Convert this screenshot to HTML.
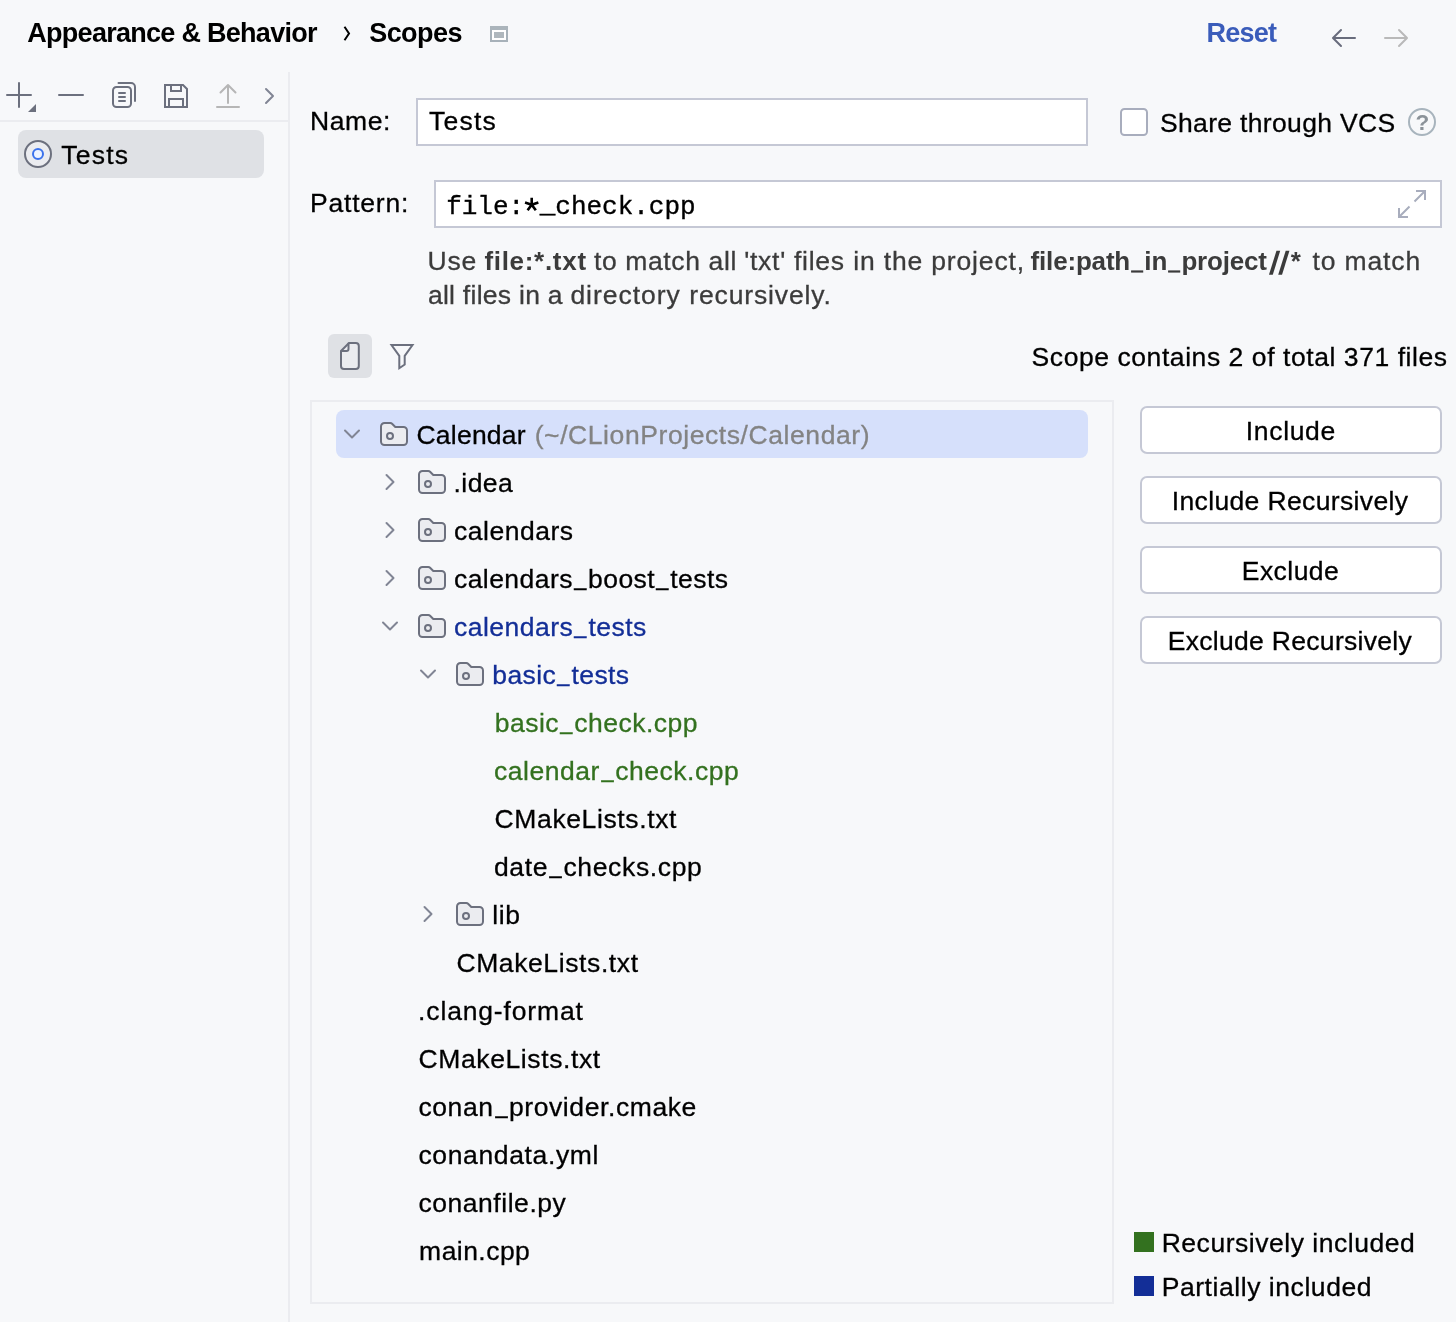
<!DOCTYPE html>
<html lang="en">
<head>
<meta charset="utf-8">
<title>Scopes</title>
<style>
html,body{margin:0;padding:0;}
body{width:1456px;height:1322px;position:relative;overflow:hidden;background:#f7f8fa;
  font-family:"Liberation Sans",sans-serif;color:#000;}
.t{position:absolute;white-space:pre;line-height:normal;font-size:26.5px;-webkit-text-stroke:0.3px;}
.b{-webkit-text-stroke:0;}
.u{display:inline-block;transform:translateY(-3px) scaleX(0.82);}
.b .u{transform:translateY(-1px) scaleX(0.75);-webkit-text-stroke:1.2px;}
#root{position:absolute;left:0;top:0;width:1456px;height:1322px;will-change:transform;}
.abs{position:absolute;}
.line{position:absolute;background:#ebecf0;}
.field{position:absolute;box-sizing:border-box;background:#fff;border:2px solid #c5c8d5;}
.btn{position:absolute;box-sizing:border-box;background:#fff;border:2px solid #c5c8d5;border-radius:7px;left:1140px;width:302px;height:48px;}
svg{position:absolute;left:0;top:0;overflow:visible;}
</style>
</head>
<body>
<div id="root">

<!-- separators -->
<div class="line" style="left:288px;top:72px;width:2px;height:1250px"></div>
<div class="line" style="left:0;top:120px;width:288px;height:2px"></div>

<!-- sidebar selection -->
<div class="abs" style="left:18px;top:130px;width:246px;height:48px;border-radius:8px;background:#dfe1e5"></div>

<!-- inputs -->
<div class="field" style="left:416px;top:98px;width:672px;height:48px"></div>
<div class="field" style="left:434px;top:180px;width:1008px;height:48px"></div>

<!-- checkbox -->
<div class="abs" style="left:1120px;top:108px;width:28px;height:28px;box-sizing:border-box;border:2px solid #a8adbd;border-radius:4.5px;background:#fff"></div>

<!-- toolbar toggle button -->
<div class="abs" style="left:328px;top:334px;width:44px;height:44px;border-radius:6px;background:#dfe1e5"></div>

<!-- tree panel -->
<div class="abs" style="left:310px;top:400px;width:804px;height:904px;box-sizing:border-box;border:2px solid #ebecf0"></div>
<div class="abs" style="left:336px;top:410px;width:752px;height:48px;border-radius:8px;background:#d6e0fb"></div>

<!-- buttons -->
<div class="btn" style="top:406px"></div>
<div class="btn" style="top:476px"></div>
<div class="btn" style="top:546px"></div>
<div class="btn" style="top:616px"></div>

<!-- legend squares -->
<div class="abs" style="left:1134px;top:1232px;width:20px;height:20px;background:#33711f"></div>
<div class="abs" style="left:1134px;top:1276px;width:20px;height:20px;background:#132e97"></div>

<!-- all icons -->
<svg width="1456" height="1322" viewBox="0 0 1456 1322" fill="none" stroke-linecap="round" stroke-linejoin="round">
  <defs>
    <g id="folder">
      <path d="M1 4.5A3.5 3.5 0 0 1 4.5 1H10.3a2.5 2.5 0 0 1 1.77.73L15.3 5H23.5A3.5 3.5 0 0 1 27 8.5V19.5A3.5 3.5 0 0 1 23.5 23H4.5A3.5 3.5 0 0 1 1 19.500Z" fill="#ebecf0" stroke="#6c707e" stroke-width="2"/>
      <circle cx="10" cy="14" r="3" fill="none" stroke="#6c707e" stroke-width="2"/>
    </g>
    <path id="chr" d="M-3.5 -7L3.5 0L-3.5 7" stroke="#818594" stroke-width="2" fill="none"/>
    <path id="chd" d="M-7 -3.5L0 3.5L7 -3.5" stroke="#818594" stroke-width="2" fill="none"/>
  </defs>

  <!-- breadcrumb chevron -->
  <path d="M344.500 26.800L349 33.500L344.500 40.200" stroke="#000" stroke-width="2" stroke-linecap="butt" stroke-linejoin="miter"/>
  <!-- header window icon -->
  <rect x="491" y="27" width="16" height="14" fill="#fff" stroke="#a7b1b9" stroke-width="2" stroke-linejoin="miter"/>
  <rect x="490" y="26" width="18" height="4" fill="#abb4bb" stroke="none"/>
  <rect x="494" y="32" width="10" height="6" fill="#afb7bd" stroke="none"/>
  <!-- nav arrows -->
  <path d="M1341 30L1333 38L1341 46M1334 38H1355" stroke="#686c7c" stroke-width="2"/>
  <path d="M1399 30L1407 38L1399 46M1406 38H1385" stroke="#b9b9b9" stroke-width="2"/>

  <!-- sidebar toolbar -->
  <g stroke="#6c707e" stroke-width="2">
    <path d="M7 95H31M19 83V107"/>
    <path d="M28 112H36V104Z" fill="#6c707e" stroke="none"/>
    <path d="M59 95H83"/>
    <!-- copy -->
    <rect x="113" y="87" width="18" height="20" rx="3.500"/>
    <path d="M119 93H125M119 97H125M119 101H125"/>
    <path d="M118.500 83H131A4 4 0 0 1 135 87V101"/>
    <!-- save -->
    <path d="M165 85H183L187 89V107H165Z" stroke-linejoin="miter"/>
    <path d="M171 85V91H181V85M169 107V99H183V107" stroke-linejoin="miter" stroke-linecap="butt"/>
  </g>
  <!-- upload (disabled) -->
  <path d="M217 107H239M228 85.500V103M220.500 92.500L228 85L235.500 92.500" stroke="#b6b6b6" stroke-width="2"/>
  <!-- more chevron -->
  <path d="M266 89L273 96L266 103" stroke="#818594" stroke-width="2"/>

  <!-- scope icon -->
  <circle cx="38" cy="154" r="13" fill="#ebecf0" stroke="#6c707e" stroke-width="2"/>
  <circle cx="38" cy="154" r="5" fill="#edf3ff" stroke="#3b72ec" stroke-width="2"/>

  <!-- help icon -->
  <circle cx="1422" cy="122" r="13" stroke="#a8b4bd" stroke-width="2"/>

  <!-- expand icon -->
  <g stroke="#a8adbd" stroke-width="2" stroke-linecap="butt" stroke-linejoin="miter">
    <path d="M1416 191H1425V200M1425 191L1414.500 201.500"/>
    <path d="M1399 208V217H1408M1399 217L1409.500 206.500"/>
  </g>

  <!-- mono asterisk -->
  <path d="M531.7 204.7L531.70 197.70M531.7 204.7L538.36 202.54M531.7 204.7L525.04 202.54M531.7 204.7L535.81 210.36M531.7 204.7L527.59 210.36" stroke="#000" stroke-width="2.600" stroke-linecap="butt"/>

  <!-- file / filter toolbar -->
  <path d="M349 343H355.800A3 3 0 0 1 358.800 346V366A3 3 0 0 1 355.800 369H344A3 3 0 0 1 341 366V351Z" fill="#ebecf0" stroke="#6c707e" stroke-width="2"/>
  <path d="M348.500 343.500V349A2 2 0 0 1 346.500 351H341.500" stroke="#6c707e" stroke-width="2"/>
  <path d="M391.500 345H412.500L404.700 355.800V364.500L399.300 368.200V355.800Z" stroke="#6c707e" stroke-width="2" stroke-linejoin="miter"/>

  <!-- tree icons -->
  <use href="#chd" x="352" y="434"/>
  <use href="#folder" x="380" y="422"/>
  <use href="#chr" x="390" y="482"/>
  <use href="#folder" x="418" y="470"/>
  <use href="#chr" x="390" y="530"/>
  <use href="#folder" x="418" y="518"/>
  <use href="#chr" x="390" y="578"/>
  <use href="#folder" x="418" y="566"/>
  <use href="#chd" x="390" y="626"/>
  <use href="#folder" x="418" y="614"/>
  <use href="#chd" x="428" y="674"/>
  <use href="#folder" x="456" y="662"/>
  <use href="#chr" x="428" y="914"/>
  <use href="#folder" x="456" y="902"/>
</svg>

<!-- help "?" glyph -->
<span class="t b" style="left:1415.400px;top:109.600px;font-size:22.500px;font-weight:700;color:#8b9299">?</span>

<span class="t b" style='left:27.30px;top:18.00px;font-size:27px;letter-spacing:-0.720px;font-weight:700'>Appearance &amp; Behavior</span>
<span class="t b" style='left:369.20px;top:18.00px;font-size:27px;letter-spacing:-0.545px;font-weight:700'>Scopes</span>
<span class="t b" style='left:1206.50px;top:18.00px;font-size:27px;letter-spacing:-0.762px;font-weight:700;color:#3a5cba'>Reset</span>
<span class="t" style='left:61.20px;top:140.00px;font-size:26.5px;letter-spacing:1.250px'>Tests</span>
<span class="t" style='left:310.10px;top:106.00px;font-size:26.5px;letter-spacing:0.553px'>Name:</span>
<span class="t" style='left:429.00px;top:106.00px;font-size:26.5px;letter-spacing:1.225px'>Tests</span>
<span class="t" style='left:1160.00px;top:108.00px;font-size:26.5px;letter-spacing:0.336px'>Share through VCS</span>
<span class="t" style='left:310.00px;top:188.00px;font-size:26.5px;letter-spacing:0.794px'>Pattern:</span>
<span class="t" style='left:446.20px;top:191.50px;font-size:26px;letter-spacing:-0.016px;font-family:"Liberation Mono", monospace;-webkit-text-stroke:0.35px #000'>file:<span style="opacity:0">*</span><span style="position:relative;top:-2px">_</span>check.cpp</span>
<span class="t" style='left:427.60px;top:246.00px;font-size:26.5px;letter-spacing:0.756px;color:#3b3b3b'>Use</span>
<span class="t b" style='left:484.40px;top:246.00px;font-size:26px;letter-spacing:0.702px;font-weight:700;color:#3b3b3b'>file:*.txt</span>
<span class="t" style='left:594.00px;top:246.00px;font-size:26.5px;letter-spacing:0.617px;color:#3b3b3b'>to match all</span>
<span class="t" style='left:744.20px;top:246.00px;font-size:26.5px;letter-spacing:0.727px;color:#3b3b3b'>'txt' files</span>
<span class="t" style='left:853.20px;top:246.00px;font-size:26.5px;letter-spacing:0.841px;color:#3b3b3b'>in the project,</span>
<span class="t b" style='left:1030.60px;top:246.00px;font-size:26px;letter-spacing:-0.182px;font-weight:700;color:#3b3b3b'>file:path<span class="u">_</span>in<span class="u">_</span>project</span>
<span class="t b" style='left:1269.60px;top:244.60px;font-size:32px;letter-spacing:0.509px;font-weight:700;color:#3b3b3b;transform:skewX(-7deg)'>//</span>
<span class="t b" style='left:1290.70px;top:246.00px;font-size:26px;letter-spacing:0.000px;font-weight:700;color:#3b3b3b'>*</span>
<span class="t" style='left:1312.40px;top:246.00px;font-size:26.5px;letter-spacing:0.873px;color:#3b3b3b'>to match</span>
<span class="t" style='left:427.90px;top:280.00px;font-size:26.5px;letter-spacing:0.273px;color:#3b3b3b'>all files in a</span>
<span class="t" style='left:570.40px;top:280.00px;font-size:26.5px;letter-spacing:0.967px;color:#3b3b3b'>directory</span>
<span class="t" style='left:689.30px;top:280.00px;font-size:26.5px;letter-spacing:0.866px;color:#3b3b3b'>recursively.</span>
<span class="t" style='left:1031.60px;top:342.00px;font-size:26.5px;letter-spacing:0.564px'>Scope contains 2 of total 371 files</span>
<span class="t" style='left:416.50px;top:420.00px;font-size:26.5px;letter-spacing:0.226px'>Calendar</span>
<span class="t" style='left:453.50px;top:468.00px;font-size:26.5px;letter-spacing:0.443px'>.idea</span>
<span class="t" style='left:454.00px;top:516.00px;font-size:26.5px;letter-spacing:0.518px'>calendars</span>
<span class="t" style='left:454.00px;top:564.00px;font-size:26.5px;letter-spacing:0.439px'>calendars<span class="u">_</span>boost<span class="u">_</span>tests</span>
<span class="t" style='left:454.00px;top:612.00px;font-size:26.5px;letter-spacing:0.475px;color:#132e97'>calendars<span class="u">_</span>tests</span>
<span class="t" style='left:492.30px;top:660.00px;font-size:26.5px;letter-spacing:0.419px;color:#132e97'>basic<span class="u">_</span>tests</span>
<span class="t" style='left:494.70px;top:708.00px;font-size:26.5px;letter-spacing:0.494px;color:#33711f'>basic<span class="u">_</span>check.cpp</span>
<span class="t" style='left:494.00px;top:756.00px;font-size:26.5px;letter-spacing:0.531px;color:#33711f'>calendar<span class="u">_</span>check.cpp</span>
<span class="t" style='left:494.60px;top:804.00px;font-size:26.5px;letter-spacing:0.615px'>CMakeLists.txt</span>
<span class="t" style='left:494.00px;top:852.00px;font-size:26.5px;letter-spacing:0.633px'>date<span class="u">_</span>checks.cpp</span>
<span class="t" style='left:492.30px;top:900.00px;font-size:26.5px;letter-spacing:0.563px'>lib</span>
<span class="t" style='left:456.40px;top:948.00px;font-size:26.5px;letter-spacing:0.608px'>CMakeLists.txt</span>
<span class="t" style='left:418.10px;top:996.00px;font-size:26.5px;letter-spacing:0.844px'>.clang-format</span>
<span class="t" style='left:418.50px;top:1044.00px;font-size:26.5px;letter-spacing:0.608px'>CMakeLists.txt</span>
<span class="t" style='left:418.40px;top:1092.00px;font-size:26.5px;letter-spacing:0.595px'>conan<span class="u">_</span>provider.cmake</span>
<span class="t" style='left:418.40px;top:1140.00px;font-size:26.5px;letter-spacing:0.636px'>conandata.yml</span>
<span class="t" style='left:418.40px;top:1188.00px;font-size:26.5px;letter-spacing:0.547px'>conanfile.py</span>
<span class="t" style='left:419.10px;top:1236.00px;font-size:26.5px;letter-spacing:0.459px'>main.cpp</span>
<span class="t" style='left:534.70px;top:420.00px;font-size:26.5px;letter-spacing:0.579px;color:#838383'>(~/CLionProjects/Calendar)</span>
<span class="t" style='left:1245.80px;top:416.00px;font-size:26.5px;letter-spacing:0.664px'>Include</span>
<span class="t" style='left:1171.70px;top:486.00px;font-size:26.5px;letter-spacing:0.366px'>Include Recursively</span>
<span class="t" style='left:1241.80px;top:556.00px;font-size:26.5px;letter-spacing:0.444px'>Exclude</span>
<span class="t" style='left:1167.80px;top:626.00px;font-size:26.5px;letter-spacing:0.298px'>Exclude Recursively</span>
<span class="t" style='left:1161.70px;top:1228.00px;font-size:26.5px;letter-spacing:0.527px'>Recursively included</span>
<span class="t" style='left:1161.70px;top:1272.00px;font-size:26.5px;letter-spacing:0.556px'>Partially included</span>

</div>
</body>
</html>
